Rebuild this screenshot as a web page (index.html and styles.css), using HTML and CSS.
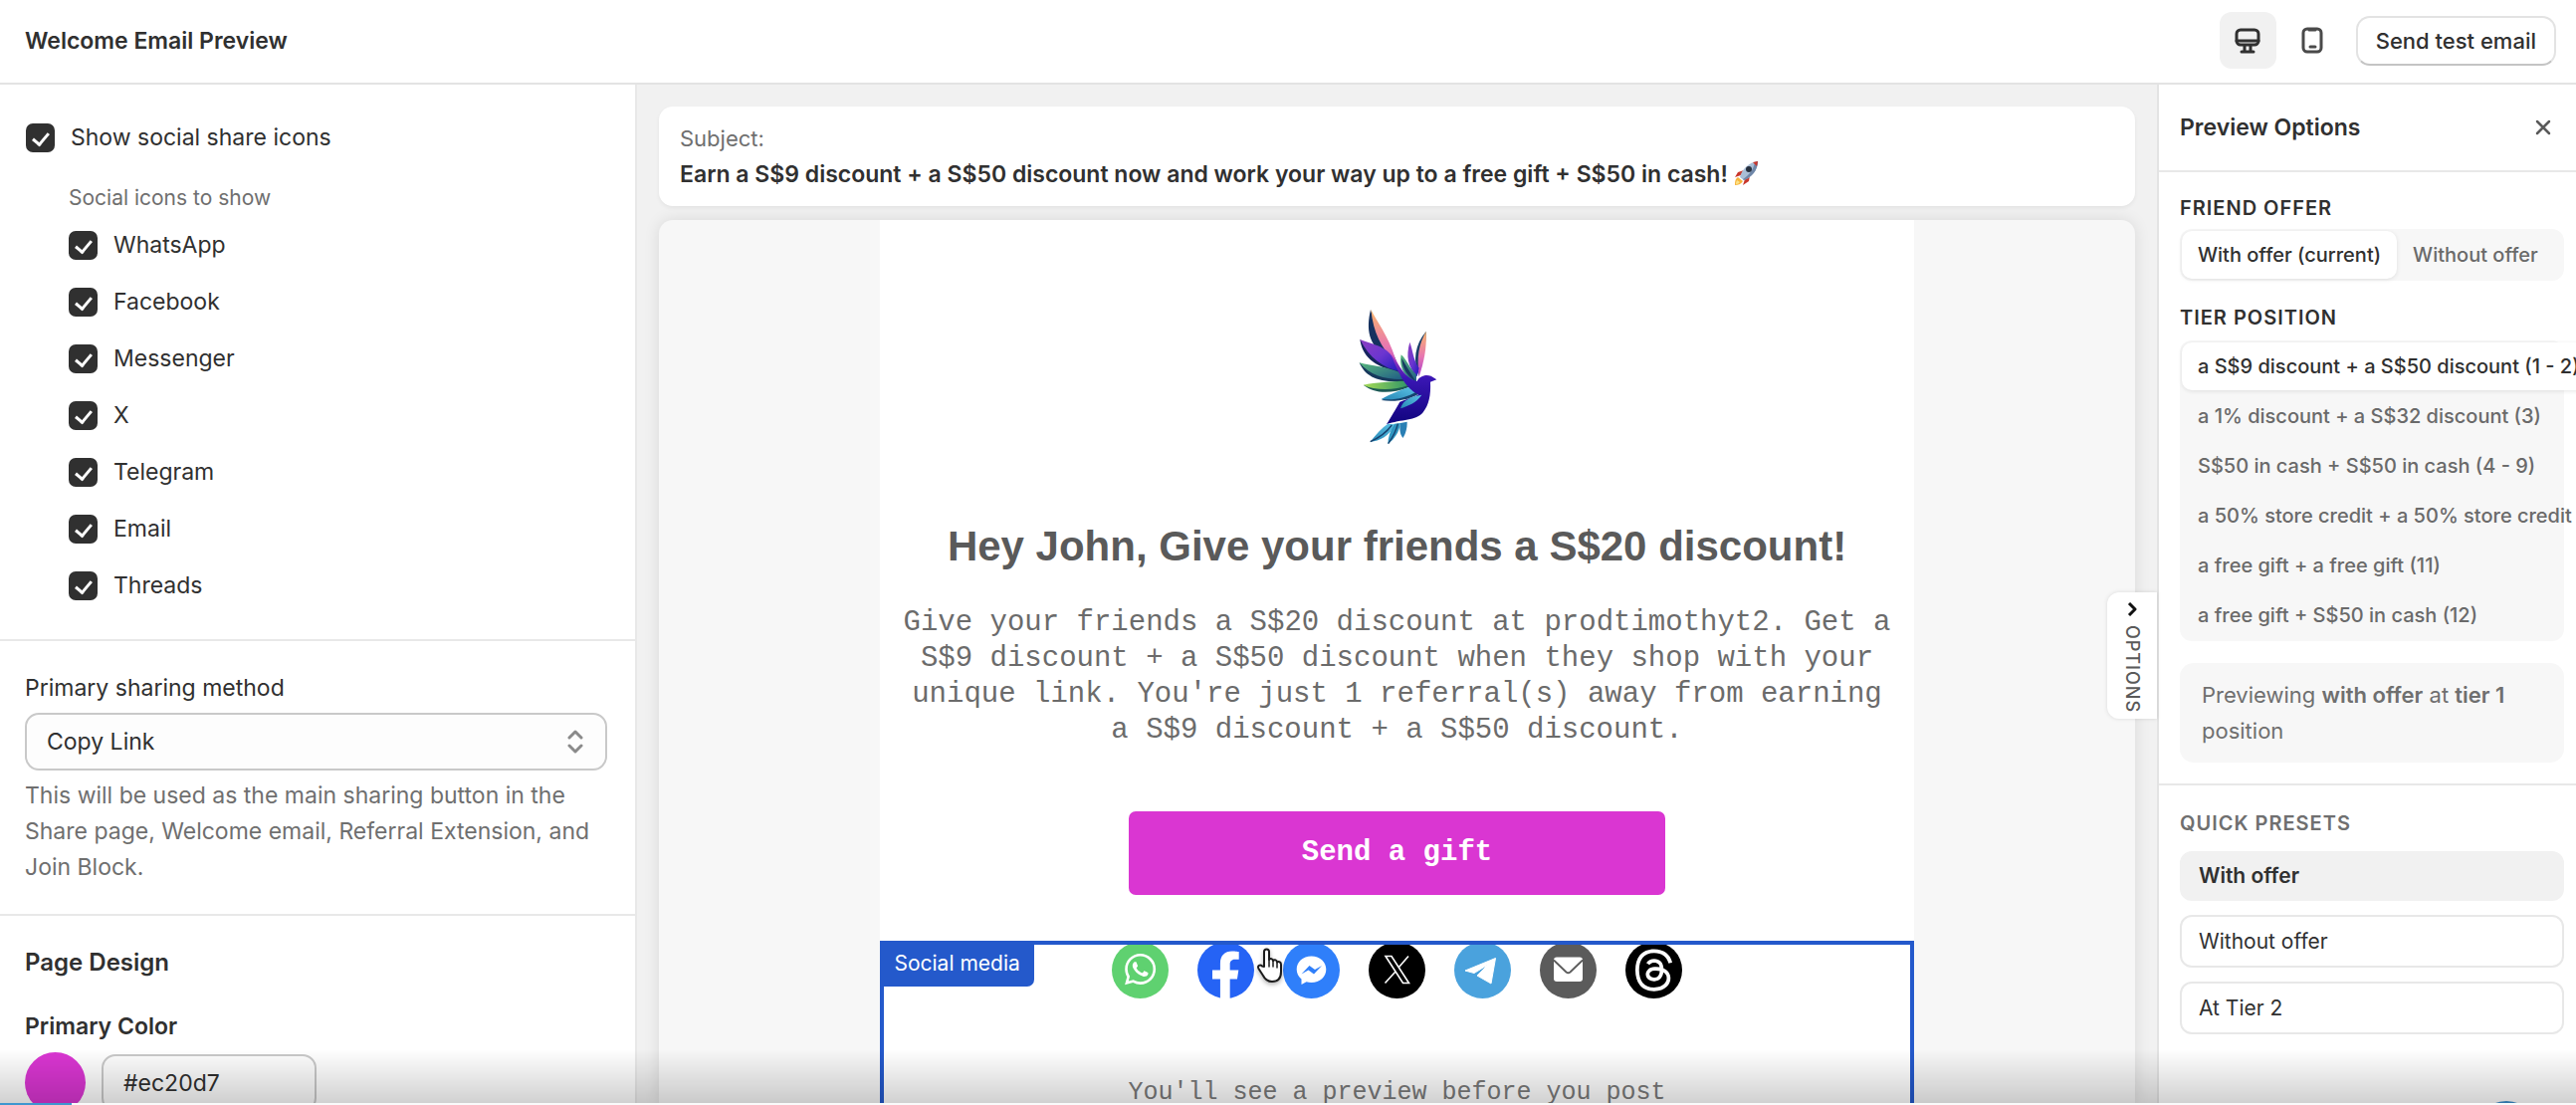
FILE: index.html
```
<!DOCTYPE html>
<html lang="en">
<head>
  <meta charset="UTF-8" />
  <meta name="viewport" content="width=device-width, initial-scale=1.0" />
  <title>Welcome Email Preview</title>
  <link rel="stylesheet" href="styles.css">
</head>
<body>

  <div class="app">
    <!-- Header -->
    <header class="topbar">
      <h1>Welcome Email Preview</h1>
      <div class="topbar-actions">
        <button class="device-btn active" aria-label="Desktop preview">
          <svg width="28" height="26" viewBox="0 0 28 26" fill="none" stroke="#303030" stroke-width="3" stroke-linecap="round" stroke-linejoin="round">
            <rect x="3" y="2" width="22" height="15" rx="4" />
            <path d="M3 13h22M11 18v5M17 18v5M8 24h12" />
          </svg>
        </button>
        <button class="device-btn" aria-label="Mobile preview">
          <svg width="22" height="28" viewBox="0 0 22 28" fill="none" stroke="#4a4a4a" stroke-width="3" stroke-linecap="round" stroke-linejoin="round">
            <rect x="2" y="2" width="18" height="23" rx="4" />
            <path d="M8 3h6M9 20h5" />
          </svg>
        </button>
        <button class="send-btn">Send test email</button>
      </div>
    </header>

    <!-- Left: Settings -->
    <aside class="settings">
      <section class="settings-section social-section">
        <label class="check"><input type="checkbox" checked> Show social share icons</label>
        <fieldset class="social-list">
          <legend>Social icons to show</legend>
          <label class="check"><input type="checkbox" checked> WhatsApp</label>
          <label class="check"><input type="checkbox" checked> Facebook</label>
          <label class="check"><input type="checkbox" checked> Messenger</label>
          <label class="check"><input type="checkbox" checked> X</label>
          <label class="check"><input type="checkbox" checked> Telegram</label>
          <label class="check"><input type="checkbox" checked> Email</label>
          <label class="check"><input type="checkbox" checked> Threads</label>
        </fieldset>
      </section>

      <section class="settings-section">
        <label class="field-label" for="share-method">Primary sharing method</label>
        <div class="select-wrap">
          <select id="share-method">
            <option>Copy Link</option>
            <option>WhatsApp</option>
            <option>Email</option>
          </select>
          <svg class="select-icon" width="16" height="24" viewBox="0 0 16 24" fill="none" stroke="#8a8a8a" stroke-width="3" stroke-linecap="round" stroke-linejoin="round">
            <path d="M2 8l6-6 6 6M2 16l6 6 6-6" />
          </svg>
        </div>
        <p class="help">This will be used as the main sharing button in the Share page, Welcome email, Referral Extension, and Join Block.</p>
      </section>

      <section class="settings-section">
        <h2>Page Design</h2>
        <label class="color-label" for="primary-color">Primary Color</label>
        <div class="color-row">
          <button class="swatch" aria-label="Pick color"></button>
          <input id="primary-color" type="text" value="#ec20d7">
        </div>
      </section>
    </aside>

    <!-- Center: Email preview -->
    <main class="preview">
      <div class="subject">
        <span>Subject:</span>
        <strong>Earn a S$9 discount + a S$50 discount now and work your way up to a free gift + S$50 in cash!
          <svg class="rocket" width="26" height="26" viewBox="0 0 26 26">
            <path d="M7 15L1 17l3-5 6-2zM11 19l-2 6 6-4 1-6z" fill="#c9372c" />
            <path d="M4 17c-3 2-3 5-3 8 3 0 6-1 8-4z" fill="#f7b53c" />
            <path d="M3 20c-1 2-1 3-1 4 2 0 3-1 4-2z" fill="#fbe389" />
            <path d="M6 17C8 9 15 2 24 1c0 9-6 16-14 19z" fill="#a9bed6" />
            <path d="M10 20C18 17 24 10 24 1l-3 1C20 9 15 15 9 19z" fill="#6f87a8" />
            <path d="M19 2l5-1-1 5z" fill="#c9372c" />
            <circle cx="15" cy="9" r="3" fill="#26303d" />
          </svg>
        </strong>
      </div>

      <div class="canvas">
        <article class="email">
          <svg class="logo" width="200" height="170" viewBox="9 0 600 510" role="img" aria-label="Bird logo">
            <defs>
              <linearGradient id="pink" x1="0" y1="0" x2="0" y2="1">
                <stop offset="0" stop-color="#f9b66a" />
                <stop offset=".55" stop-color="#e877b0" />
                <stop offset="1" stop-color="#a93ccf" />
              </linearGradient>
              <linearGradient id="violet" x1="0" y1="0" x2="1" y2="1">
                <stop offset="0" stop-color="#8c3fc0" />
                <stop offset=".5" stop-color="#6b35d0" />
                <stop offset="1" stop-color="#1c18b8" />
              </linearGradient>
              <linearGradient id="green" x1="0" y1="0" x2="1" y2="1">
                <stop offset="0" stop-color="#58b77c" />
                <stop offset="1" stop-color="#1f5b86" />
              </linearGradient>
              <linearGradient id="lime" x1="0" y1="0" x2="1" y2="0">
                <stop offset="0" stop-color="#a6dc55" />
                <stop offset="1" stop-color="#2f9468" />
              </linearGradient>
              <linearGradient id="sky" x1="0" y1="1" x2="1" y2="0">
                <stop offset="0" stop-color="#2787b5" />
                <stop offset="1" stop-color="#5cc3e6" />
              </linearGradient>
              <linearGradient id="body" x1="0" y1="0" x2="0" y2="1">
                <stop offset="0" stop-color="#b03fc4" />
                <stop offset=".35" stop-color="#3a16b4" />
                <stop offset="1" stop-color="#10047e" />
              </linearGradient>
            </defs>
            <path d="M228 60C214 120 222 165 272 198L310 230C300 180 250 140 228 60Z" fill="#16315f" />
            <path d="M229 60C244 92 282 140 302 206L330 262 294 206C262 178 236 130 229 60Z" fill="url(#pink)" />
            <path d="M196 150C202 196 232 232 318 250L300 214C270 176 226 180 196 150Z" fill="#16245f" />
            <path d="M196 150C226 164 276 168 296 206L322 248C262 236 224 204 196 150Z" fill="url(#violet)" />
            <path d="M194 220C212 262 250 282 332 276L318 250C282 236 226 244 194 220Z" fill="#17395c" />
            <path d="M194 220C232 230 290 234 318 252L328 270C276 272 226 260 194 220Z" fill="url(#green)" />
            <path d="M206 287C236 310 280 318 344 294L326 274C296 276 244 294 206 287Z" fill="#1d5a55" />
            <path d="M206 287C240 280 300 276 326 276L342 288C300 304 240 304 206 287Z" fill="url(#lime)" />
            <path d="M260 333C300 340 350 332 382 308L346 296C318 318 288 318 260 333Z" fill="#16446f" />
            <path d="M260 330C288 314 316 304 342 294L368 306C336 326 300 334 260 330Z" fill="url(#sky)" />
            <path d="M395 126C362 164 354 214 374 262C372 210 396 190 395 126Z" fill="#173d68" />
            <path d="M395 126C374 164 366 200 374 262C388 220 398 176 395 126Z" fill="url(#pink)" />
            <path d="M346 158C334 200 340 232 368 262L374 236C356 212 356 184 346 158Z" fill="url(#violet)" />
            <path d="M320 196C312 236 334 268 366 282L366 256C344 236 338 212 320 196Z" fill="url(#green)" />
            <path d="M322 206C322 236 340 262 364 276C348 248 336 232 322 206Z" fill="#173a62" />
            <path d="M288 192C318 232 330 266 368 276C374 262 392 254 410 260L427 271 408 278C410 318 404 346 386 370C366 396 320 390 276 406C292 380 302 362 316 338C350 326 364 322 372 316C330 296 312 250 288 192Z" fill="url(#body)" />
            <path d="M318 358C326 330 352 322 382 317C366 342 340 350 318 358Z" fill="url(#sky)" />
            <path d="M280 404C262 416 244 436 227 458C254 458 286 440 302 406Z" fill="url(#sky)" />
            <path d="M300 404C288 424 280 444 280 465C300 450 314 430 318 402Z" fill="#2e95c0" />
            <path d="M318 402C314 420 316 434 325 447C336 430 338 414 338 398Z" fill="#2a7fb4" />
            <path d="M227 458C254 446 276 430 292 408M281 464C294 446 304 430 310 404" fill="none" stroke="#15406d" stroke-width="4" />
          </svg>

          <h2>Hey John, Give your friends a S$20 discount!</h2>
          <p class="email-text">Give your friends a S$20 discount at prodtimothyt2. Get a S$9 discount + a S$50 discount when they shop with your unique link. You're just 1 referral(s) away from earning a S$9 discount + a S$50 discount.</p>
          <a class="gift-btn" href="#">Send a gift</a>

          <!-- Selected block -->
          <div class="social-block">
            <span class="block-tag">Social media</span>
            <div class="social-icons">
              <a href="#" aria-label="WhatsApp">
                <svg viewBox="0 0 57 57">
                  <circle cx="28.5" cy="28.5" r="28.5" fill="#5fd170" />
                  <path transform="translate(13 12) scale(1.3)" fill="#fff" d="M17.472 14.382c-.297-.149-1.758-.867-2.03-.967-.273-.099-.471-.148-.67.15-.197.297-.767.966-.94 1.164-.173.199-.347.223-.644.075-.297-.15-1.255-.463-2.39-1.475-.883-.788-1.48-1.761-1.653-2.059-.173-.297-.018-.458.13-.606.134-.133.298-.347.446-.52.149-.174.198-.298.298-.497.099-.198.05-.371-.025-.52-.075-.149-.669-1.612-.916-2.207-.242-.579-.487-.5-.669-.51-.173-.008-.371-.01-.57-.01-.198 0-.52.074-.792.372-.272.297-1.04 1.016-1.04 2.479 0 1.462 1.065 2.875 1.213 3.074.149.198 2.096 3.2 5.077 4.487.709.306 1.262.489 1.694.625.712.227 1.36.195 1.871.118.571-.085 1.758-.719 2.006-1.413.248-.694.248-1.289.173-1.413-.074-.124-.272-.198-.57-.347m-5.421 7.403h-.004a9.87 9.87 0 01-5.031-1.378l-.361-.214-3.741.982.998-3.648-.235-.374a9.86 9.86 0 01-1.51-5.26c.001-5.45 4.436-9.884 9.888-9.884 2.64 0 5.122 1.03 6.988 2.898a9.825 9.825 0 012.893 6.994c-.003 5.45-4.437 9.884-9.885 9.884m8.413-18.297A11.815 11.815 0 0012.05 0C5.495 0 .16 5.335.157 11.892c0 2.096.547 4.142 1.588 5.945L.057 24l6.305-1.654a11.882 11.882 0 005.683 1.448h.005c6.554 0 11.89-5.335 11.893-11.893a11.821 11.821 0 00-3.48-8.413Z" />
                </svg>
              </a>
              <a href="#" aria-label="Facebook">
                <svg viewBox="0 0 57 57">
                  <circle cx="28.5" cy="28.5" r="28.5" fill="#2563f5" />
                  <path transform="translate(-3.4 -2.8) scale(2.6)" fill="#fff" d="M10.125 24v-8.46H7.078v-3.47h3.047V9.43c0-3.007 1.792-4.669 4.533-4.669 1.312 0 2.686.235 2.686.235v2.953H15.83c-1.491 0-1.956.925-1.956 1.874v2.25h3.328l-.532 3.47h-2.796V24z" />
                </svg>
              </a>
              <a href="#" aria-label="Messenger">
                <svg viewBox="0 0 57 57">
                  <circle cx="28.5" cy="28.5" r="28.5" fill="#2f7ffa" />
                  <path fill="#fff" d="M28.5 14.5C20 14.5 13.7 20.3 13.7 27.8c0 4 1.8 7.3 4.8 9.7v5.5l5-2.7c1.6.5 3.2.7 5 .7 8.5 0 14.8-5.7 14.8-13.2S37 14.5 28.5 14.5z" />
                  <path fill="#2f7ffa" d="M18.5 32.5l8-8.5 5.5 4 7-4-8 8.5-5.500-4z" />
                </svg>
              </a>
              <a href="#" aria-label="X">
                <svg viewBox="0 0 57 57">
                  <circle cx="28.5" cy="28.5" r="28.5" fill="#000" />
                  <path fill="none" stroke="#fff" stroke-width="1.6" d="M17 14.5h6L40.5 41.5h-6zM40 14.5L30 26M16.5 41.5L27 30" />
                </svg>
              </a>
              <a href="#" aria-label="Telegram">
                <svg viewBox="0 0 57 57">
                  <circle cx="28.5" cy="28.5" r="28.5" fill="#4aa2dd" />
                  <path fill="#fff" stroke="#fff" stroke-linejoin="round" d="M11 29L41.5 16.5 37 42 23 34 34 23 20 31.5z" />
                </svg>
              </a>
              <a href="#" aria-label="Email">
                <svg viewBox="0 0 57 57">
                  <circle cx="28.5" cy="28.5" r="28.5" fill="#5b5b5b" />
                  <rect x="14" y="15.5" width="29" height="24.5" rx="3" fill="#fff" />
                  <path d="M14 18.5l12.5 12c1.3 1 2.7 1 4 0L43 18.5" fill="none" stroke="#5b5b5b" stroke-width="1.8" />
                </svg>
              </a>
              <a href="#" aria-label="Threads">
                <svg viewBox="0 0 57 57">
                  <circle cx="28.5" cy="28.5" r="28.5" fill="#000" />
                  <path transform="translate(7.4 7.4) scale(1.76)" fill="#fff" d="M12.186 24h-.007c-3.581-.024-6.334-1.205-8.184-3.509C2.35 18.44 1.5 15.586 1.472 12.01v-.017c.03-3.579.879-6.43 2.525-8.482C5.845 1.205 8.6.024 12.18 0h.014c2.746.02 5.043.725 6.826 2.098 1.677 1.29 2.858 3.13 3.509 5.467l-2.04.569c-1.104-3.96-3.898-5.984-8.304-6.015-2.91.022-5.11.936-6.54 2.717C4.307 6.504 3.616 8.914 3.589 12c.027 3.086.718 5.496 2.057 7.164 1.43 1.783 3.631 2.698 6.54 2.717 2.623-.02 4.358-.631 5.8-2.045 1.647-1.613 1.618-3.593 1.09-4.798-.31-.71-.873-1.3-1.634-1.75-.192 1.352-.622 2.446-1.284 3.272-.886 1.102-2.14 1.704-3.73 1.79-1.202.065-2.361-.218-3.259-.801-1.063-.689-1.685-1.74-1.752-2.964-.065-1.19.408-2.285 1.33-3.082.88-.76 2.119-1.207 3.583-1.291a13.853 13.853 0 0 1 3.02.142c-.126-.742-.375-1.332-.75-1.757-.513-.586-1.308-.883-2.359-.89h-.029c-.844 0-1.992.232-2.721 1.32L7.734 7.847c.98-1.454 2.568-2.256 4.478-2.256h.044c3.194.02 5.097 1.975 5.287 5.388.108.046.216.094.321.142 1.49.7 2.58 1.761 3.154 3.07.797 1.82.871 4.79-1.548 7.158-1.85 1.81-4.094 2.628-7.277 2.65Zm1.003-11.69c-.242 0-.487.007-.739.021-1.836.103-2.98.946-2.916 2.143.067 1.256 1.452 1.839 2.784 1.767 1.224-.065 2.818-.543 3.086-3.71a10.5 10.5 0 0 0-2.215-.221z" />
                </svg>
              </a>
            </div>
            <p class="social-note">You'll see a preview before you post</p>
            <svg class="pointer" width="30" height="38" viewBox="0 0 30 38">
              <path d="M8 20V5c0-3.5 5-3.5 5 0v8c1-1.5 4-1 4 1 1.5-1.5 4-.5 4 1.5 2-1 4 0 4 2.5v7c0 7-3 10-9 10-5 0-7-2-9-6l-4.500-7C1 19 4 17.5 6 19.500z" fill="#fff" stroke="#1c1c1c" stroke-width="2" stroke-linejoin="round" />
              <path d="M13 12v8M17 14v6M21 16v5" stroke="#1c1c1c" stroke-width="1.5" stroke-linecap="round" />
            </svg>
          </div>
        </article>
      </div>

      <button class="options-tab">
        <svg width="10" height="14" viewBox="0 0 10 14" fill="none" stroke="#111" stroke-width="3" stroke-linejoin="round">
          <path d="M2 1l6 6-6 6" />
        </svg>
        <span>OPTIONS</span>
      </button>
    </main>

    <!-- Right: Preview options -->
    <aside class="options">
      <div class="options-head">
        <h2>Preview Options</h2>
        <button class="close-btn" aria-label="Close">
          <svg width="16" height="16" viewBox="0 0 16 16" stroke="#5a5a5a" stroke-width="2.5" stroke-linecap="round">
            <path d="M2 2l12 12M14 2L2 14" />
          </svg>
        </button>
      </div>

      <div class="options-body">
        <h3>Friend offer</h3>
        <div class="segmented">
          <button class="segment active">With offer (current)</button>
          <button class="segment">Without offer</button>
        </div>

        <h3>Tier position</h3>
        <div class="segmented tiers">
          <button class="segment active">a S$9 discount + a S$50 discount (1 - 2)</button>
          <button class="segment">a 1% discount + a S$32 discount (3)</button>
          <button class="segment">S$50 in cash + S$50 in cash (4 - 9)</button>
          <button class="segment">a 50% store credit + a 50% store credit (10)</button>
          <button class="segment">a free gift + a free gift (11)</button>
          <button class="segment">a free gift + S$50 in cash (12)</button>
        </div>

        <p class="status">Previewing <strong>with offer</strong> at <strong>tier 1</strong> position</p>
      </div>

      <div class="presets">
        <h3>Quick presets</h3>
        <button class="preset active">With offer</button>
        <button class="preset">Without offer</button>
        <button class="preset">At Tier 2</button>
      </div>
    </aside>
  </div>

  <!-- Player overlay -->
  <div class="fade"></div>
  <div class="chat-bubble"></div>
  <div class="footer-strip"><div class="progress"></div></div>

</body>
</html>
```
FILE: styles.css
```
* {
  box-sizing: border-box;
  margin: 0;
  padding: 0;
}

body {
  background: #fff;
  color: #303030;
  font-family: Inter, "Liberation Sans", sans-serif;
  font-size: 23px;
  line-height: 36px;
  overflow: hidden;
}

button,
input,
select {
  font: inherit;
  color: inherit;
}

button {
  background: none;
  border: none;
  cursor: pointer;
}

svg {
  display: block;
}

.app {
  display: grid;
  grid-template-columns: 640px minmax(0, 1fr) 421px;
  grid-template-rows: auto minmax(0, 1fr);
  height: 100vh;
}

/* Header */
.topbar {
  grid-column: 1 / -1;
  display: flex;
  justify-content: space-between;
  align-items: center;
  padding: 12px 20px 14px 25px;
  border-bottom: 2px solid #e3e3e3;
}

.topbar h1 {
  font-size: 23px;
  font-weight: 600;
}

.topbar-actions {
  display: flex;
  align-items: center;
}

.device-btn {
  display: flex;
  align-items: center;
  justify-content: center;
  width: 57px;
  height: 57px;
  margin-right: 8px;
  border-radius: 12px;
}

.device-btn.active {
  background: #f1f1f1;
}

.send-btn {
  height: 50px;
  margin-left: 7px;
  padding: 0 18px;
  border: 2px solid #e3e3e3;
  border-bottom-color: #c4c4c4;
  border-radius: 14px;
  font-size: 22px;
  font-weight: 500;
}

/* Settings */
.settings {
  border-right: 2px solid #e8e8e8;
  overflow: hidden;
}

.settings-section {
  padding: 29px 28px 29px 25px;
  border-bottom: 2px solid #e8e8e8;
}

.social-section {
  padding: 35px 25px 36px 26px;
}

.check {
  display: flex;
  align-items: center;
  gap: 16px;
  height: 36px;
}

.check input {
  appearance: none;
  display: flex;
  justify-content: center;
  width: 29px;
  height: 29px;
  border-radius: 7px;
  background: #303030;
}

.check input:checked::after {
  content: "";
  width: 7px;
  height: 13px;
  margin-top: 6px;
  border: solid #fff;
  border-width: 0 3px 3px 0;
  transform: rotate(40deg);
}

.social-list {
  display: grid;
  gap: 21px;
  padding-left: 43px;
  border: none;
}

.social-list legend {
  padding: 25px 0 11px;
  font-size: 21px;
  color: #6f6f6f;
}

.field-label {
  display: block;
  margin-bottom: 7px;
}

.select-wrap {
  position: relative;
}

.select-wrap select {
  appearance: none;
  width: 100%;
  height: 58px;
  padding: 0 20px;
  border: 2px solid #c9c9c9;
  border-radius: 14px;
  background: #fdfdfd;
}

.select-icon {
  position: absolute;
  right: 24px;
  top: 17px;
}

.help {
  margin-top: 7px;
  color: #6f6f6f;
}

.settings h2 {
  font-size: 24px;
  font-weight: 600;
}

.color-label {
  display: block;
  margin: 28px 0 8px;
  font-weight: 600;
}

.color-row {
  display: flex;
  align-items: center;
  gap: 16px;
}

.swatch {
  width: 61px;
  height: 61px;
  border-radius: 50%;
  background: #da36d2;
}

.color-row input {
  width: 216px;
  height: 58px;
  padding: 0 20px;
  border: 2px solid #c9c9c9;
  border-radius: 14px;
  background: #fdfdfd;
}

/* Preview */
.preview {
  position: relative;
  display: flex;
  flex-direction: column;
  gap: 14px;
  padding: 22px 22px 0;
  background: #f1f1f1;
}

.subject {
  display: flex;
  flex-direction: column;
  padding: 14px 21px;
  border-radius: 14px;
  background: #fff;
  box-shadow: 0 2px 4px rgba(0, 0, 0, 0.06);
}

.subject span {
  font-size: 22px;
  color: #6f6f6f;
}

.subject strong {
  font-weight: 600;
}

.rocket {
  display: inline-block;
  vertical-align: -4px;
}

.canvas {
  flex: 1;
  min-height: 0;
  overflow: hidden;
  border-radius: 14px 14px 0 0;
  background: #f7f7f7;
  box-shadow: 0 0 16px rgba(0, 0, 0, 0.1);
}

.email {
  display: flex;
  flex-direction: column;
  align-items: center;
  width: 70%;
  margin: 0 auto;
  padding-top: 70px;
  background: #fff;
  color: #5a5a5a;
  text-align: center;
}

.email h2 {
  margin: 60px 0 31px;
  font-family: "Helvetica", "Liberation Sans", sans-serif;
  font-size: 42px;
  font-weight: 700;
  line-height: 56px;
}

.email-text {
  padding: 0 20px;
  font-family: "Courier New", "Liberation Mono", monospace;
  font-size: 29px;
  color: #6b6b6b;
}

.gift-btn {
  width: 52%;
  margin: 63px 0 46px;
  border-radius: 7px;
  background: #da36d2;
  color: #fff;
  font-family: "Courier New", "Liberation Mono", monospace;
  font-size: 29px;
  font-weight: 700;
  line-height: 84px;
  text-decoration: none;
}

.social-block {
  position: relative;
  width: 100%;
  padding: 1px 0 60px;
}

.social-block::after {
  content: "";
  position: absolute;
  inset: 0;
  border: 4px solid #2459cb;
  pointer-events: none;
}

.block-tag {
  position: absolute;
  top: 0;
  left: 0;
  padding: 5px 14px;
  border-radius: 0 0 7px 0;
  background: #2459cb;
  color: #fff;
  font-size: 21px;
}

.social-icons {
  display: flex;
  justify-content: center;
  gap: 29px;
}

.social-icons svg {
  width: 57px;
  height: 57px;
}

.social-note {
  margin-top: 77px;
  font-family: "Courier New", "Liberation Mono", monospace;
  font-size: 25px;
  color: #7a7a7a;
}

.pointer {
  position: absolute;
  top: 6px;
  left: 36.4%;
  filter: drop-shadow(0 2px 2px rgba(0, 0, 0, 0.3));
}

.options-tab {
  position: absolute;
  top: 510px;
  right: 0;
  display: flex;
  flex-direction: column;
  align-items: center;
  gap: 9px;
  width: 50px;
  height: 127px;
  padding-top: 10px;
  border-radius: 12px 0 0 12px;
  background: #fff;
  box-shadow: 0 0 4px rgba(0, 0, 0, 0.12);
  font-size: 18px;
  font-weight: 500;
  color: #5a5a5a;
}

.options-tab span {
  writing-mode: vertical-rl;
  letter-spacing: 1px;
}

/* Preview options */
.options {
  border-left: 2px solid #e3e3e3;
  overflow: hidden;
}

.options-head {
  display: flex;
  justify-content: space-between;
  align-items: center;
  height: 88px;
  padding: 0 25px 0 21px;
  border-bottom: 2px solid #e8e8e8;
}

.options-head h2 {
  font-size: 23px;
  font-weight: 600;
}

.options h3 {
  font-size: 20px;
  font-weight: 600;
  letter-spacing: 1px;
  text-transform: uppercase;
}

.options-body {
  padding: 18px 12px 21px 21px;
  border-bottom: 2px solid #e8e8e8;
}

.segmented {
  display: flex;
  margin: 3px 0 19px;
  padding: 2px;
  border-radius: 12px;
  background: #f7f7f7;
}

.segment {
  padding: 6px 16px;
  border-radius: 10px;
  color: #6a6a6a;
  font-size: 20px;
  font-weight: 450;
  text-align: left;
  white-space: nowrap;
}

.segment.active {
  background: #fff;
  color: #303030;
  font-weight: 500;
  box-shadow: 0 1px 4px rgba(0, 0, 0, 0.1);
}

.tiers {
  display: grid;
  gap: 2px;
  margin: 5px 0 22px;
}

.status {
  padding: 14px 22px;
  border-radius: 14px;
  background: #f7f7f7;
  color: #6f6f6f;
  font-size: 22px;
}

.status strong {
  font-weight: 600;
}

.presets {
  display: grid;
  gap: 14px;
  padding: 20px 12px 20px 21px;
}

.presets h3 {
  margin-bottom: -4px;
  color: #6f6f6f;
}

.preset {
  height: 53px;
  padding: 0 17px;
  border: 2px solid #e8e8e8;
  border-radius: 12px;
  font-size: 21px;
  text-align: left;
}

.preset.active {
  height: 50px;
  border-color: #f1f1f1;
  background: #f1f1f1;
  font-weight: 600;
}

/* Player overlay */
.fade {
  position: fixed;
  left: 0;
  right: 0;
  bottom: 2px;
  height: 54px;
  background: linear-gradient(rgba(0, 0, 0, 0), rgba(0, 0, 0, 0.18));
  pointer-events: none;
}

.chat-bubble {
  position: fixed;
  right: 37px;
  bottom: -62px;
  width: 66px;
  height: 66px;
  border-radius: 50%;
  background: #2f74a8;
}

.footer-strip {
  position: fixed;
  left: 0;
  right: 0;
  bottom: 0;
  height: 2px;
  background: #fafafa;
}

.progress {
  width: 72px;
  height: 2px;
  background: #3e97cf;
}
```
